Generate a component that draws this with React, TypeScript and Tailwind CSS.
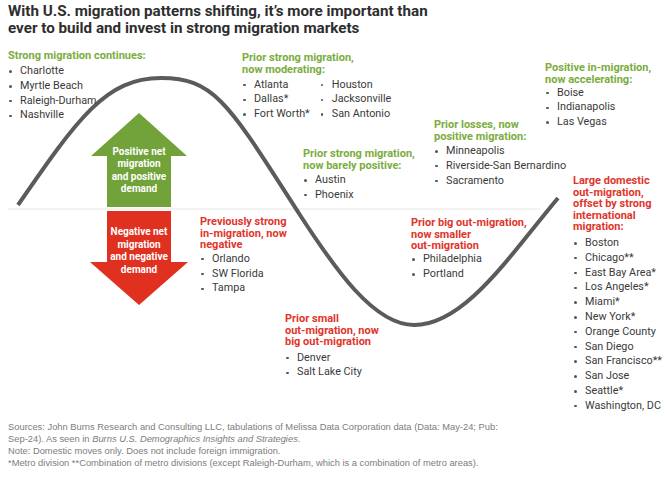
import React from "react";

type Group = {
  pos: string;
  title: string[];
  red?: boolean;
  gap: string;
  cols: string[][];
};

const groups: Group[] = [
  {
    pos: "left-[8px] top-[6px]",
    title: ["Strong migration continues:"],
    gap: "mt-[2.5px]",
    cols: [["Charlotte", "Myrtle Beach", "Raleigh-Durham", "Nashville"]],
  },
  {
    pos: "left-[242px] top-[8px]",
    title: ["Prior strong migration,", "now moderating:"],
    gap: "mt-[2.5px]",
    cols: [
      ["Atlanta", "Dallas*", "Fort Worth*"],
      ["Houston", "Jacksonville", "San Antonio"],
    ],
  },
  {
    pos: "left-[545px] top-[18px]",
    title: ["Positive in-migration,", "now accelerating:"],
    gap: "mt-[0.5px]",
    cols: [["Boise", "Indianapolis", "Las Vegas"]],
  },
  {
    pos: "left-[434px] top-[75px]",
    title: ["Prior losses, now", "positive migration:"],
    gap: "mt-[1.8px]",
    cols: [["Minneapolis", "Riverside-San Bernardino", "Sacramento"]],
  },
  {
    pos: "left-[303px] top-[104px]",
    title: ["Prior strong migration,", "now barely positive:"],
    gap: "mt-[1.8px]",
    cols: [["Austin", "Phoenix"]],
  },
  {
    pos: "left-[573px] top-[131px]",
    title: [
      "Large domestic",
      "out-migration,",
      "offset by strong",
      "international",
      "migration:",
    ],
    red: true,
    gap: "mt-[3px]",
    cols: [
      [
        "Boston",
        "Chicago**",
        "East Bay Area*",
        "Los Angeles*",
        "Miami*",
        "New York*",
        "Orange County",
        "San Diego",
        "San Francisco**",
        "San Jose",
        "Seattle*",
        "Washington, DC",
      ],
    ],
  },
  {
    pos: "left-[200px] top-[172px]",
    title: ["Previously strong", "in-migration, now", "negative"],
    red: true,
    gap: "mt-[1px]",
    cols: [["Orlando", "SW Florida", "Tampa"]],
  },
  {
    pos: "left-[411px] top-[173px]",
    title: ["Prior big out-migration,", "now smaller", "out-migration"],
    red: true,
    gap: "mt-[0.5px]",
    cols: [["Philadelphia", "Portland"]],
  },
  {
    pos: "left-[285px] top-[269px]",
    title: ["Prior small", "out-migration, now", "big out-migration"],
    red: true,
    gap: "mt-[2.8px]",
    cols: [["Denver", "Salt Lake City"]],
  },
];

function Label({ g }: { g: Group }) {
  return (
    <div className={`absolute ${g.pos}`}>
      <div
        className={`text-[11px] font-bold leading-[11.6px] whitespace-nowrap ${
          g.red ? "text-[#e0352a]" : "text-[#7aad3e]"
        }`}
      >
        {g.title.map((t) => (
          <div key={t}>{t}</div>
        ))}
      </div>
      <div className={`flex gap-[10px] ${g.gap}`}>
        {g.cols.map((col, i) => (
          <ul key={i} className="text-[10.8px] leading-[14.8px] text-[#3a3a3a]">
            {col.map((c) => (
              <li key={c} className="flex items-center whitespace-nowrap">
                <span className="ml-[1px] mr-[8.5px] h-[2.5px] w-[2.5px] rounded-full bg-[#555]" />
                {c}
              </li>
            ))}
          </ul>
        ))}
      </div>
    </div>
  );
}

export default function App() {
  return (
    <div className="flex h-[477px] w-[665px] flex-col overflow-hidden bg-white font-['Roboto',sans-serif]">
      {/* Title */}
      <div className="h-[44px] px-[8px] pt-[3px] text-[15.2px] font-bold leading-[17px] text-[#2e2e2e]">
        With U.S. migration patterns shifting, it’s more important than
        <br />
        ever to build and invest in strong migration markets
      </div>

      {/* Diagram */}
      <div className="relative h-[376px]">
        <svg
          className="absolute inset-0"
          width="665"
          height="376"
          viewBox="0 44 665 376"
        >
          <line x1="8" y1="209" x2="540" y2="209" stroke="#e6e6e6" strokeWidth="1" />
          <path
            d="M18,205 C78,118 106,78 161,78 C216,78 230,106.5 300,215 C335,269 374,325 414,325 C464,325 508,258 558,198"
            fill="none"
            stroke="#5b5b5b"
            strokeWidth="4"
          />
          <polygon
            points="139,113 187,156 171,156 171,207 107,207 107,156 91,156"
            fill="#72a23a"
          />
          <polygon
            points="107,211 171,211 171,262 188,262 139,305 90,262 107,262"
            fill="#e0301f"
          />
        </svg>

        <div className="absolute left-[89px] top-[102px] w-[100px] text-center text-[10px] font-bold leading-[12.4px] text-white">
          Positive net
          <br />
          migration
          <br />
          and positive
          <br />
          demand
        </div>
        <div className="absolute left-[89px] top-[182px] w-[100px] text-center text-[10px] font-bold leading-[12.6px] text-white">
          Negative net
          <br />
          migration
          <br />
          and negative
          <br />
          demand
        </div>

        {groups.map((g) => (
          <Label key={g.title[0]} g={g} />
        ))}
      </div>

      {/* Footnotes */}
      <div className="px-[8px] pt-[1px] font-['Liberation_Sans',Arial,sans-serif] text-[9.35px] leading-[12px] text-[#7d7d7d]">
        Sources: John Burns Research and Consulting LLC, tabulations of Melissa Data Corporation data (Data: May-24; Pub:
        <br />
        Sep-24). As seen in <i>Burns U.S. Demographics Insights and Strategies</i>.
        <br />
        Note: Domestic moves only. Does not include foreign immigration.
        <br />
        *Metro division **Combination of metro divisions (except Raleigh-Durham, which is a combination of metro areas).
      </div>
    </div>
  );
}
